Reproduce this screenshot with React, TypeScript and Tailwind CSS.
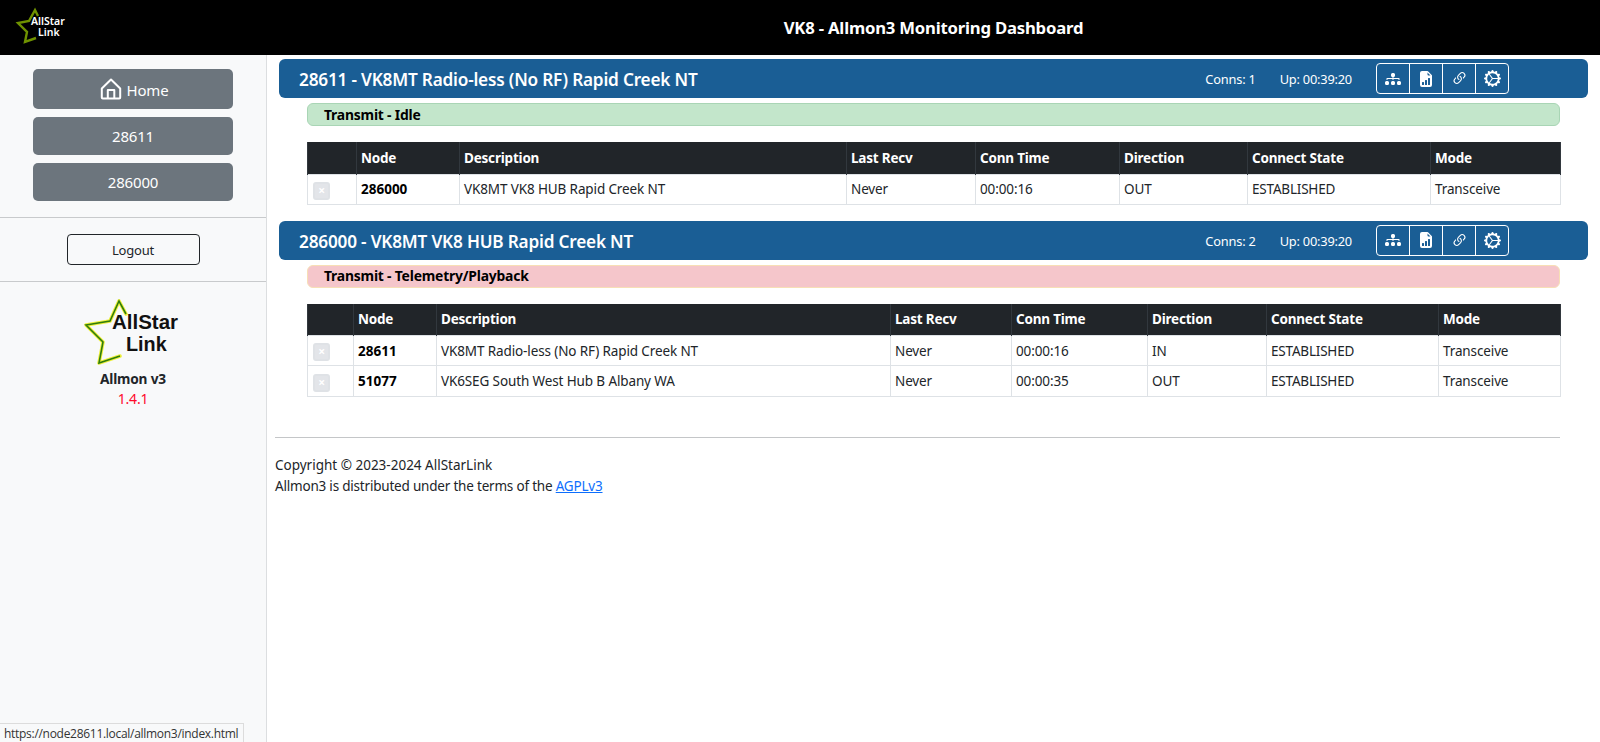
import { BsDiagram3Fill, BsFileEarmarkBarGraphFill, BsLink45Deg, BsGearWideConnected } from "react-icons/bs";

type Row = { node: string; desc: string; conn: string; dir: string; tall?: boolean };

const headers = ["", "Node", "Description", "Last Recv", "Conn Time", "Direction", "Connect State", "Mode"];

function StarLogo({ large }: { large?: boolean }) {
  if (large) {
    return (
      <svg width="130" height="80" viewBox="0 0 130 80" className="block">
        <polyline className="blur-[0.6px]" points="58,24 51,11 42,31 18,35 35,52 31,73 52,66" fill="none" stroke="#eef03a" strokeWidth="3.6" strokeLinejoin="round" strokeLinecap="round" />
        <polyline points="58,24 51,11 42,31 18,35 35,52 31,73 52,66" fill="none" stroke="#2f7d0c" strokeWidth="1.6" />
      </svg>
    );
  }
  return (
    <svg width="40" height="46" viewBox="0 0 40 46" className="block">
      <polyline points="38,16 35,10 29,21 18,23 27,32 25,42 36,38" fill="none" stroke="#6f9200" strokeWidth="2.4" />
    </svg>
  );
}

function Table({ rows, cols }: { rows: Row[]; cols: number[] }) {
  return (
    <table className="w-[1253px] table-fixed border-collapse text-[13.5px] leading-[20px] tracking-[-0.12px] text-[#212529]">
      <colgroup>
        {cols.map((c, i) => (
          <col key={i} style={{ width: c }} />
        ))}
      </colgroup>
      <thead>
        <tr className="h-[32px] bg-[#212529] text-white">
          {headers.map((h, i) => (
            <th key={i} className="border-x border-[#32383e] px-[4px] text-left font-bold tracking-[-0.2px]">
              {h}
            </th>
          ))}
        </tr>
      </thead>
      <tbody>
        {rows.map((r) => (
          <tr key={r.node} className={r.tall ? "h-[31px]" : "h-[30px]"}>
            <td className="border border-[#dee2e6] px-[5px]">
              <span className="mt-[3px] flex h-[18px] w-[17px] items-center justify-center rounded-[3px] border-2 border-[#dfe2e6] bg-[#e3e5e9] text-[12px] font-bold leading-none text-white">
                ×
              </span>
            </td>
            <td className="border border-[#dee2e6] px-[4px] font-bold tracking-normal text-black">{r.node}</td>
            <td className="border border-[#dee2e6] px-[4px]">{r.desc}</td>
            <td className="border border-[#dee2e6] px-[4px]">Never</td>
            <td className="border border-[#dee2e6] px-[4px]">{r.conn}</td>
            <td className="border border-[#dee2e6] px-[4px]">{r.dir}</td>
            <td className="border border-[#dee2e6] px-[4px] tracking-[-0.2px]">ESTABLISHED</td>
            <td className="border border-[#dee2e6] px-[4px]">Transceive</td>
          </tr>
        ))}
      </tbody>
    </table>
  );
}

function NodeBlock({
  title,
  conns,
  status,
  statusClass,
  rows,
  cols,
}: {
  title: string;
  conns: number;
  status: string;
  statusClass: string;
  rows: Row[];
  cols: number[];
}) {
  return (
    <section>
      <div className="ml-[4px] flex h-[39px] w-[1309px] items-center rounded-[6px] bg-[#1a5e95] pl-[20px] text-white">
        <h2 className="flex-1 pt-[3px] text-[17.2px] font-semibold leading-none">{title}</h2>
        <span className="mr-[24px] pt-[3px] text-[12.8px]">Conns: {conns}</span>
        <span className="mr-[24px] pt-[3px] text-[12.8px]">Up: 00:39:20</span>
        <div className="mr-[79px] flex h-[31px] w-[133px] overflow-hidden rounded-[4px] border border-white">
          <span className="flex flex-1 items-center justify-center text-[16px]">
            <BsDiagram3Fill />
          </span>
          <span className="flex flex-1 items-center justify-center border-l border-white text-[16px]">
            <BsFileEarmarkBarGraphFill />
          </span>
          <span className="flex flex-1 items-center justify-center border-l border-white text-[17px]">
            <BsLink45Deg />
          </span>
          <span className="flex flex-1 items-center justify-center border-l border-white text-[17px]">
            <BsGearWideConnected />
          </span>
        </div>
      </div>
      <div className={`ml-[32px] mt-[5px] flex h-[23px] w-[1253px] items-center rounded-[6px] border pl-[16px] pt-[1px] text-[13.9px] font-bold text-black ${statusClass}`}>
        {status}
      </div>
      <div className="ml-[32px] mt-[16px]">
        <Table rows={rows} cols={cols} />
      </div>
    </section>
  );
}

export default function App() {
  return (
    <div className="relative flex h-screen flex-col overflow-hidden bg-white font-['Noto_Sans','Open_Sans',sans-serif] tracking-[-0.2px]">
      <header className="relative flex h-[55px] shrink-0 items-center justify-center bg-black pl-[267px] text-white">
        <div className="absolute left-0 top-0 h-[46px] w-[70px]">
          <StarLogo />
          <span className="absolute left-[31px] top-[16px] text-[10.5px] font-semibold leading-[10px] tracking-normal">AllStar</span>
          <span className="absolute left-[38px] top-[27px] text-[10.5px] font-semibold leading-[10px] tracking-normal">Link</span>
        </div>
        <h1 className="text-[16.7px] font-bold">VK8 - Allmon3 Monitoring Dashboard</h1>
      </header>
      <div className="flex min-h-0 flex-1">
        <aside className="flex w-[267px] shrink-0 flex-col border-r border-[#dcdee0] bg-[#f8f9fa]">
          <nav className="flex flex-col items-center pt-[14px]">
            <button className="flex h-[40px] w-[200px] items-center justify-center gap-[5px] rounded-[5px] bg-[#6c757d] pl-[2px] text-[15px] text-white">
              <svg width="22" height="22" viewBox="0 0 22 22" fill="none" stroke="currentColor" strokeWidth="2" strokeLinejoin="round">
                <path d="M11 1.5 L1.8 10.5 V19.5 Q1.8 20.5 2.8 20.5 H19.2 Q20.2 20.5 20.2 19.5 V10.5 Z" />
                <path d="M7.8 20.5 V12 H14.3 V20.5" />
              </svg>
              <span className="pt-[2px]">Home</span>
            </button>
            <button className="mt-[8px] h-[38px] w-[200px] rounded-[5px] bg-[#6c757d] text-[15px] text-white">28611</button>
            <button className="mt-[8px] h-[38px] w-[200px] rounded-[5px] bg-[#6c757d] text-[15px] text-white">286000</button>
          </nav>
          <hr className="mt-[16px] border-[#c8cacc]" />
          <div className="flex justify-center pt-[16px]">
            <button className="h-[31px] w-[133px] rounded-[4px] border border-[#212529] pt-[2px] text-[13px] text-[#212529]">Logout</button>
          </div>
          <hr className="mt-[16px] border-[#c8cacc]" />
          <div className="flex flex-col items-center pt-[8px]">
            <div className="relative h-[79px] w-[130px]">
              <StarLogo large />
              <span className="absolute left-[44px] top-[21px] font-['Liberation_Sans',sans-serif] text-[20.5px] font-bold leading-[22px] tracking-normal text-[#111]">AllStar</span>
              <span className="absolute left-[58px] top-[43px] font-['Liberation_Sans',sans-serif] text-[19.8px] font-bold leading-[22px] tracking-normal text-[#111]">Link</span>
            </div>
            <div className="text-[13.7px] font-bold leading-[20px] text-[#212529]">Allmon v3</div>
            <div className="text-[14px] leading-[20px] text-[#ff0a2a]">1.4.1</div>
          </div>
        </aside>
        <main className="min-w-0 flex-1 pl-[8px] pt-[4px]">
          <NodeBlock
            title="28611 - VK8MT Radio-less (No RF) Rapid Creek NT"
            conns={1}
            status="Transmit - Idle"
            statusClass="border-[#a9d5b5] bg-[#c3e6cb]"
            cols={[49, 103, 387, 129, 144, 128, 183, 130]}
            rows={[{ node: "286000", desc: "VK8MT VK8 HUB Rapid Creek NT", conn: "00:00:16", dir: "OUT" }]}
          />
          <div className="h-[16px]" />
          <NodeBlock
            title="286000 - VK8MT VK8 HUB Rapid Creek NT"
            conns={2}
            status="Transmit - Telemetry/Playback"
            statusClass="border-[#f7dfb6] bg-[#f5c6cb]"
            cols={[46, 83, 454, 121, 136, 119, 172, 122]}
            rows={[
              { node: "28611", desc: "VK8MT Radio-less (No RF) Rapid Creek NT", conn: "00:00:16", dir: "IN" },
              { node: "51077", desc: "VK6SEG South West Hub B Albany WA", conn: "00:00:35", dir: "OUT", tall: true },
            ]}
          />
          <hr className="mt-[40px] w-[1285px] border-[#c4c6c8]" />
          <p className="mt-[17px] text-[13.5px] leading-[21px] text-[#212529]">
            <span className="tracking-normal">Copyright © 2023-2024 AllStarLink</span>
            <br />
            Allmon3 is distributed under the terms of the{" "}
            <a href="#" className="text-[#0d6efd] underline">
              AGPLv3
            </a>
          </p>
        </main>
      </div>
      <div className="absolute bottom-0 left-0 h-[19px] w-[244px] overflow-hidden border-r border-t border-[#dcdcdc] bg-[#f8f9fa] pl-[4px] font-['Open_Sans',sans-serif] text-[12px] leading-[20px] tracking-[-0.29px] text-[#333]">
        https://node28611.local/allmon3/index.html
      </div>
    </div>
  );
}
